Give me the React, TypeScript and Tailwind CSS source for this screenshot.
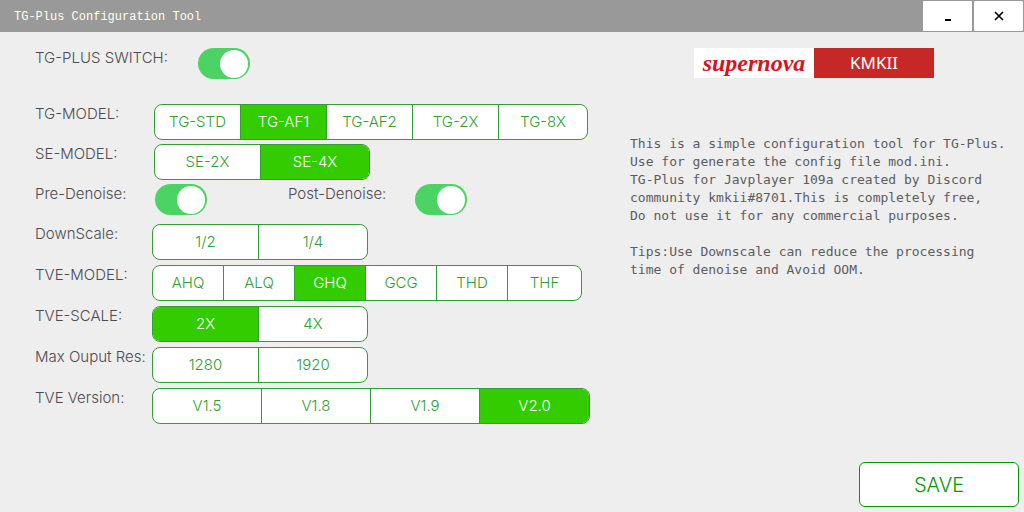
import { useId, useState } from "react";

function Toggle({ id }: { id: string }) {
  return (
    <input
      id={id}
      type="checkbox"
      role="switch"
      defaultChecked
      className="flex h-[31px] w-[52px] shrink-0 cursor-pointer appearance-none items-center rounded-full bg-[#c8c8c8] px-[2px] before:h-[28px] before:w-[28px] before:rounded-full before:bg-white checked:justify-end checked:bg-[#4bd463]"
    />
  );
}

type SegmentedProps = {
  label: string;
  labelWidth?: string;
  options: string[];
  initial?: string;
  segment: string;
};

function Segmented({ label, labelWidth = "w-[117px]", options, initial, segment }: SegmentedProps) {
  const id = useId();
  const [value, setValue] = useState(initial);
  return (
    <div className="flex items-start">
      <span id={id} className={`${labelWidth} shrink-0 whitespace-nowrap leading-5`}>
        {label}
      </span>
      <div
        role="radiogroup"
        aria-labelledby={id}
        className="flex h-9 divide-x divide-[#2f9e33] overflow-hidden rounded-lg border border-[#2f9e33] bg-white text-[#2f9e33]"
      >
        {options.map((option) => (
          <label
            key={option}
            className={`${segment} relative flex cursor-pointer items-center justify-center has-checked:bg-[#33cc00] has-checked:text-white`}
          >
            <input
              type="radio"
              name={id}
              value={option}
              checked={value === option}
              onChange={() => setValue(option)}
              className="sr-only"
            />
            {option}
          </label>
        ))}
      </div>
    </div>
  );
}

export default function App() {
  return (
    <div className="flex min-h-screen flex-col bg-[#eeeeee] font-['Inter',sans-serif] text-[15px] font-light text-[#4b4b50]">
      <header className="flex h-8 items-stretch bg-[#999999]">
        <h1 className="flex-1 self-center pt-[2px] pl-[14px] font-['Liberation_Mono',monospace] text-xs font-normal text-[#fffff0]">
          TG-Plus Configuration Tool
        </h1>
        <button
          type="button"
          aria-label="Minimize"
          className="flex w-[51px] items-center justify-center rounded-xs border border-[#999999] bg-white"
        >
          <svg width="10" height="10" viewBox="0 0 10 10" aria-hidden="true">
            <path d="M2 9h6" stroke="#000" strokeWidth="2" />
          </svg>
        </button>
        <button
          type="button"
          aria-label="Close"
          className="flex w-[51px] items-center justify-center rounded-xs border border-[#999999] bg-white"
        >
          <svg width="10" height="10" viewBox="0 0 10 10" aria-hidden="true">
            <path d="M1 1l8 8M9 1l-8 8" stroke="#000" strokeWidth="1.6" />
          </svg>
        </button>
      </header>

      <main className="flex flex-1 items-start pt-4 pl-[35px]">
        <section className="w-[595px] shrink-0">
          <div className="mb-[25px] flex items-start">
            <label htmlFor="tg-switch" className="w-[163px] leading-5">
              TG-PLUS SWITCH:
            </label>
            <Toggle id="tg-switch" />
          </div>
          <div className="flex flex-col gap-[5px]">
            <div className="flex flex-col gap-1">
              <Segmented
                label="TG-MODEL:"
                labelWidth="w-[119px]"
                options={["TG-STD", "TG-AF1", "TG-AF2", "TG-2X", "TG-8X"]}
                initial="TG-AF1"
                segment="w-[86px] last:w-[88px]"
              />
              <Segmented
                label="SE-MODEL:"
                labelWidth="w-[119px]"
                options={["SE-2X", "SE-4X"]}
                initial="SE-4X"
                segment="w-[106px] last:w-[108px]"
              />
              <div className="flex h-[35px] items-start">
                <label htmlFor="pre-denoise" className="w-[120px] leading-5">
                  Pre-Denoise:
                </label>
                <Toggle id="pre-denoise" />
                <label htmlFor="post-denoise" className="ml-[81px] w-[127px] leading-5">
                  Post-Denoise:
                </label>
                <Toggle id="post-denoise" />
              </div>
            </div>
            <Segmented
              label="DownScale:"
              options={["1/2", "1/4"]}
              segment="w-[106px] last:w-[108px]"
            />
            <Segmented
              label="TVE-MODEL:"
              options={["AHQ", "ALQ", "GHQ", "GCG", "THD", "THF"]}
              initial="GHQ"
              segment="w-[71px] last:w-[73px]"
            />
            <Segmented
              label="TVE-SCALE:"
              options={["2X", "4X"]}
              initial="2X"
              segment="w-[106px] last:w-[108px]"
            />
            <Segmented
              label="Max Ouput Res:"
              options={["1280", "1920"]}
              segment="w-[106px] last:w-[108px]"
            />
            <Segmented
              label="TVE Version:"
              options={["V1.5", "V1.8", "V1.9", "V2.0"]}
              initial="V2.0"
              segment="w-[109px]"
            />
          </div>
        </section>

        <section className="min-w-0 flex-1">
          <div className="ml-16 flex h-[30px] w-60">
            <span className="flex flex-1 items-center justify-center bg-white font-['Liberation_Serif',serif] text-2xl leading-6 font-bold text-[#d8141c] italic">
              supernova
            </span>
            <span className="flex flex-1 items-center justify-center bg-[#c62828] font-['Noto_Sans',sans-serif] text-[17px] font-normal text-white">
              KMKII
            </span>
          </div>
          <div className="mt-[57px] flex flex-col gap-[18px] font-['DejaVu_Sans_Mono',monospace] text-[13px] leading-[18px] font-normal whitespace-nowrap text-[#5c5c60]">
            <p>
              This is a simple configuration tool for TG-Plus.
              <br />
              Use for generate the config file mod.ini.
              <br />
              TG-Plus for Javplayer 109a created by Discord
              <br />
              community kmkii#8701.This is completely free,
              <br />
              Do not use it for any commercial purposes.
            </p>
            <p>
              Tips:Use Downscale can reduce the processing
              <br />
              time of denoise and Avoid OOM.
            </p>
          </div>
        </section>
      </main>

      <footer className="flex justify-end pr-[5px] pb-[5px]">
        <button
          type="button"
          className="h-[45px] w-40 rounded-md border border-[#009900] bg-white text-xl font-light text-[#009900]"
        >
          SAVE
        </button>
      </footer>
    </div>
  );
}
